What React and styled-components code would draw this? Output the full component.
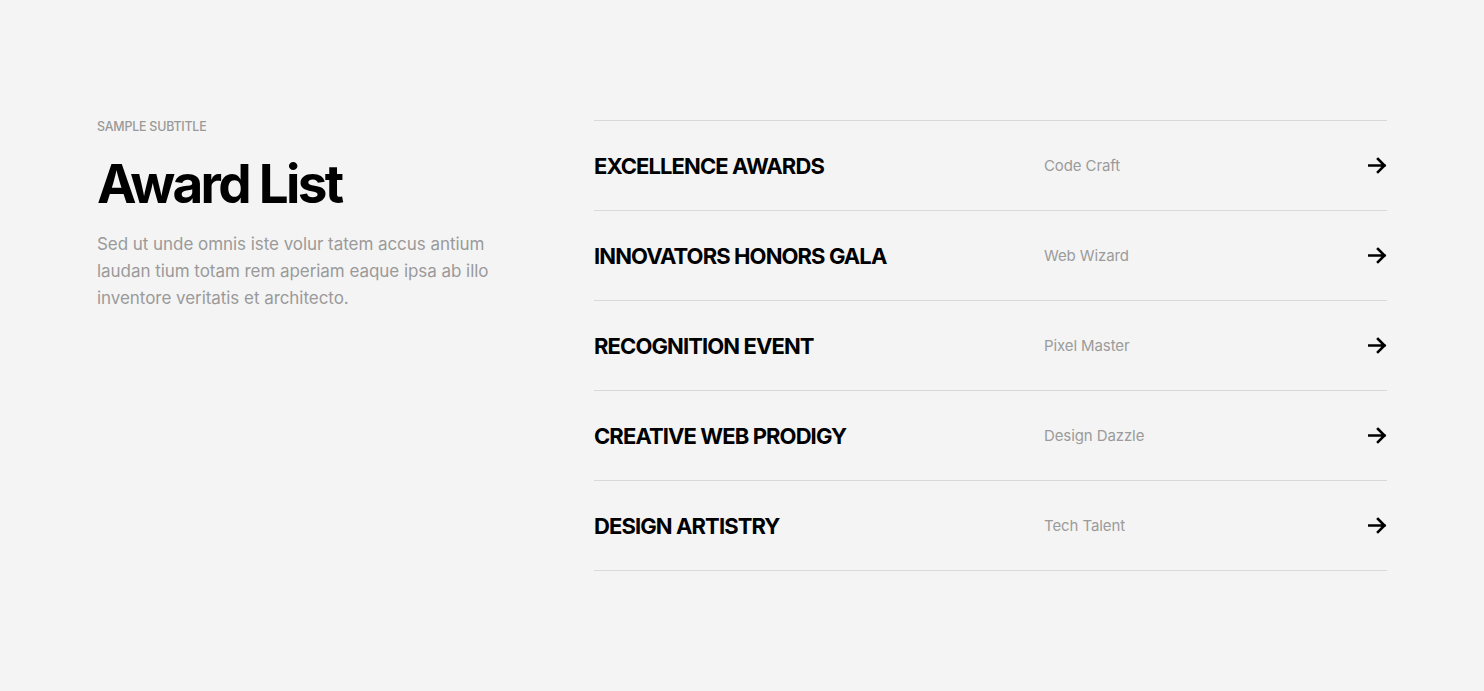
import React from "react";
import styled, { createGlobalStyle } from "styled-components";

const Global = createGlobalStyle`
  html, body { margin: 0; padding: 0; background: #f4f4f4; }
  body { font-family: Inter, "Noto Sans", sans-serif; -webkit-font-smoothing: antialiased; }
  * { box-sizing: border-box; }
`;

const Section = styled.section`
  background: #f4f4f4;
  min-height: 691px;
  padding: 120px 97px 0 97px;
`;

const Grid = styled.div`
  display: grid;
  grid-template-columns: 1fr 793px;
  align-items: start;
`;

const Intro = styled.div`
  margin-top: -2px;
`;

const Subtitle = styled.div`
  font-size: 12.4px;
  line-height: 18px;
  font-weight: 500;
  color: #999999;
  text-transform: uppercase;
  letter-spacing: -0.2px;
`;

const Heading = styled.h2`
  margin: 15px 0 0;
  font-size: 53px;
  line-height: 66px;
  font-weight: 700;
  color: #000;
  letter-spacing: -2.7px;
`;

const Text = styled.p`
  margin: 14px 0 0;
  font-size: 17px;
  line-height: 27px;
  color: #9a9a9a;
  max-width: 400px;
  letter-spacing: -0.05px;
`;

const List = styled.ul`
  list-style: none;
  margin: 0;
  padding: 0;
  border-top: 1px solid #d9d9d9;
`;

const Row = styled.li`
  display: grid;
  grid-template-columns: 450px 1fr auto;
  align-items: center;
  height: 90px;
  border-bottom: 1px solid #d9d9d9;
`;

const Title = styled.span`
  font-size: 22px;
  font-weight: 700;
  color: #000;
  text-transform: uppercase;
  letter-spacing: -0.9px;
`;

const Meta = styled.span`
  font-size: 15px;
  color: #9b9b9b;
  letter-spacing: -0.1px;
`;

const ArrowWrap = styled.span`
  display: flex;
  align-items: center;
  color: #000;
`;

const Arrow = () => (
  <svg width="19" height="17" viewBox="0 0 19 17" fill="none">
    <path d="M1 8.5H16.5M10 2L16.5 8.5L10 15" stroke="currentColor" strokeWidth="2.6" strokeLinecap="square" strokeLinejoin="miter" />
  </svg>
);

const awards = [
  ["Excellence Awards", "Code Craft"],
  ["Innovators Honors Gala", "Web Wizard"],
  ["Recognition Event", "Pixel Master"],
  ["Creative Web Prodigy", "Design Dazzle"],
  ["Design Artistry", "Tech Talent"],
];

export default function App() {
  return (
    <>
      <Global />
      <Section>
        <Grid>
          <Intro>
            <Subtitle>Sample Subtitle</Subtitle>
            <Heading>Award List</Heading>
            <Text>
              Sed ut unde omnis iste volur tatem accus antium laudan tium totam rem aperiam eaque ipsa ab illo inventore veritatis et architecto.
            </Text>
          </Intro>
          <List>
            {awards.map(([t, m]) => (
              <Row key={t}>
                <Title>{t}</Title>
                <Meta>{m}</Meta>
                <ArrowWrap>
                  <Arrow />
                </ArrowWrap>
              </Row>
            ))}
          </List>
        </Grid>
      </Section>
    </>
  );
}
